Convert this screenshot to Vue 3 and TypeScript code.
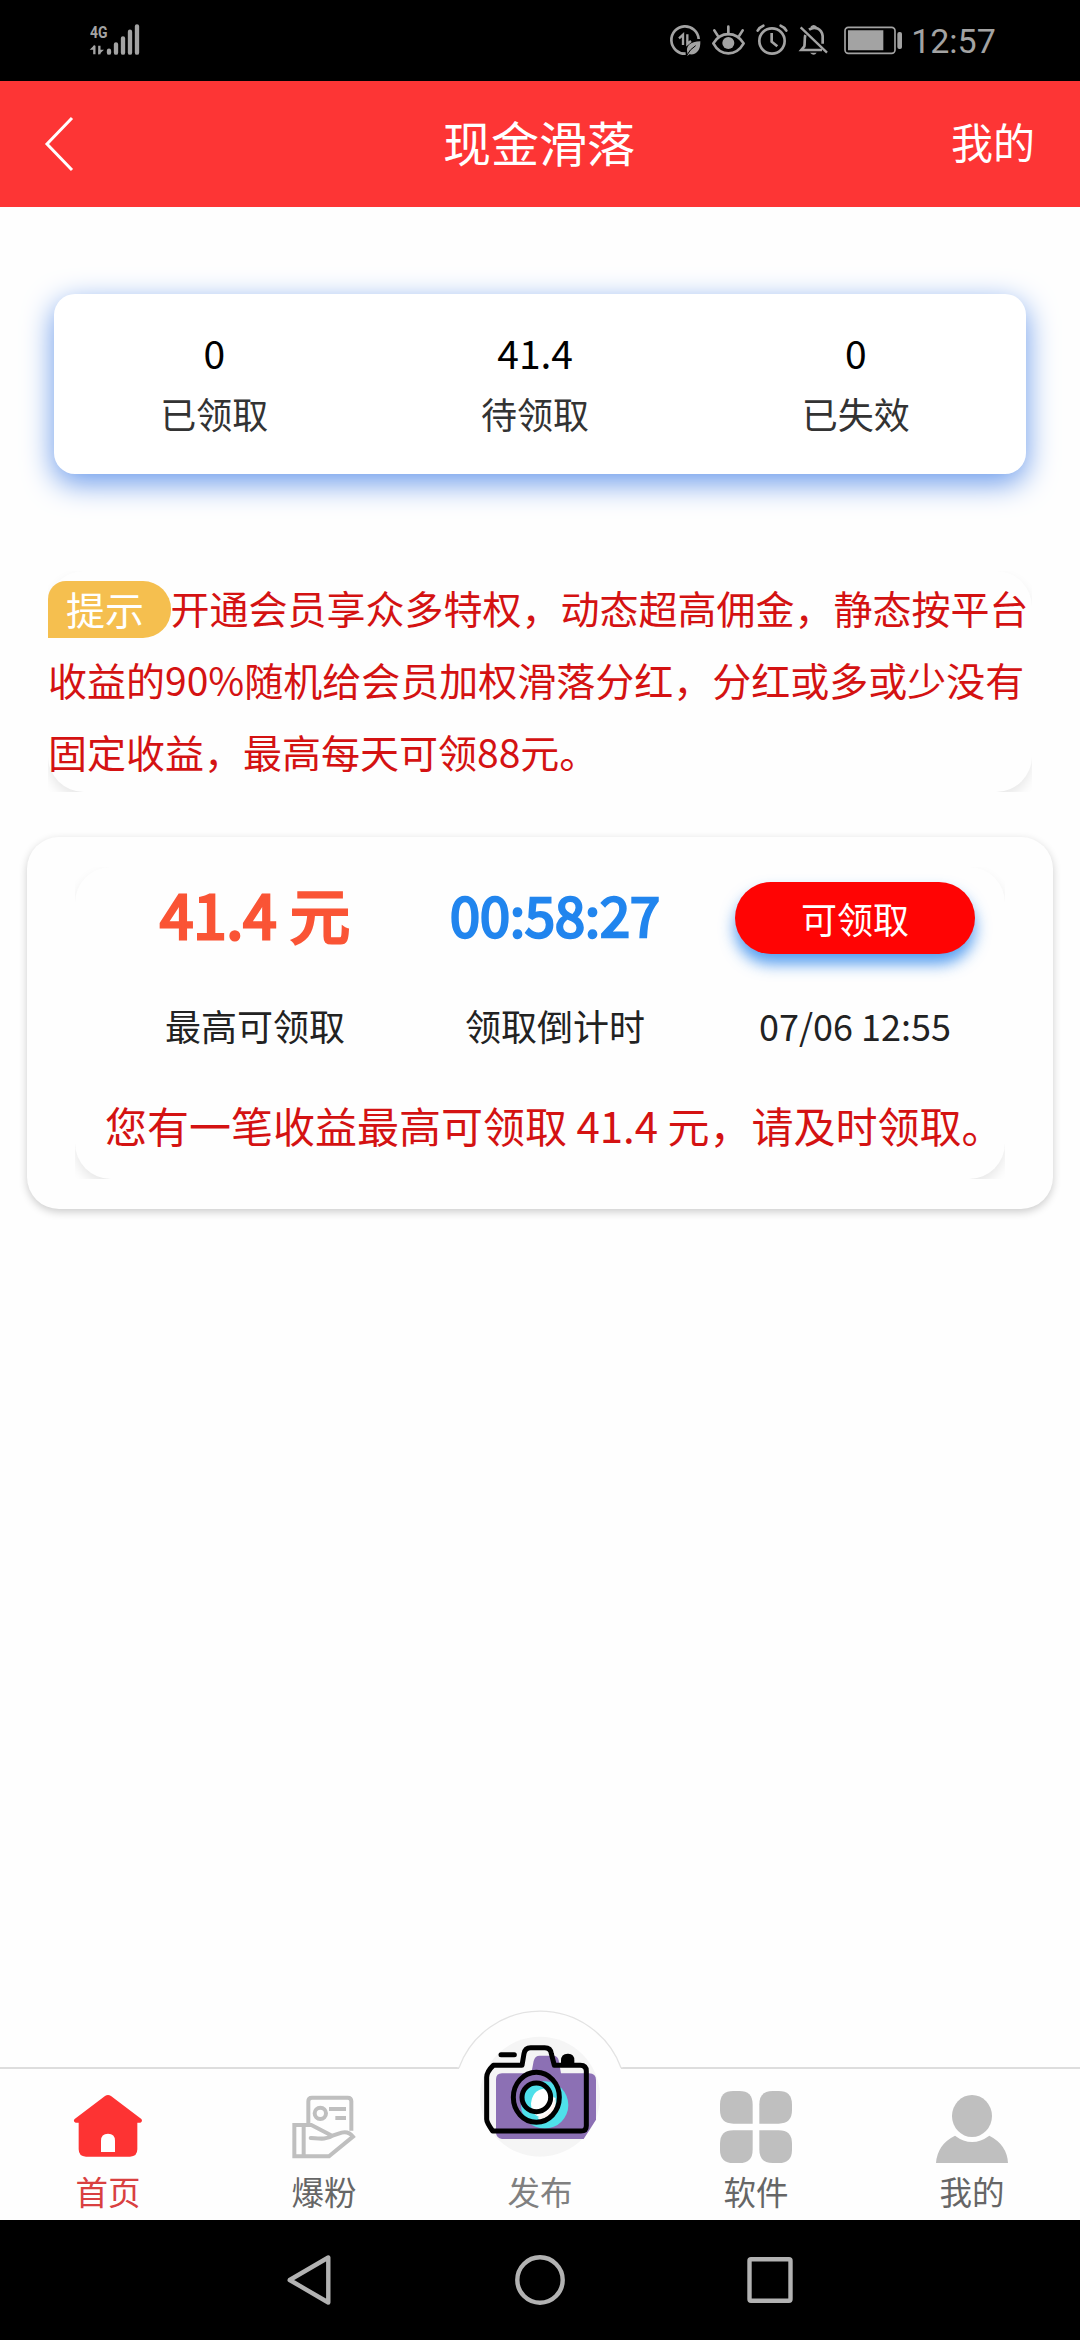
<script setup lang="ts">
import { ref } from 'vue'

interface Stat {
  value: string
  label: string
}

const stats = ref<Stat[]>([
  { value: '0', label: '已领取' },
  { value: '41.4', label: '待领取' },
  { value: '0', label: '已失效' },
])

const amount = ref('41.4')
const countdown = ref('00:58:27')
const createdAt = ref('07/06 12:55')
</script>

<template>
  <div class="phone">
    <div class="status">
      <div class="network">
        <span class="net-type">4G</span>
        <svg class="signal" viewBox="84 70 162 100">
          <g fill="none" stroke="#a3a3a3" stroke-linecap="round">
            <path d="M147 153v6M168 134v25M189 116v43M210 96v63M231 80v79" stroke-width="13" />
            <path d="M103 138v26M118 138v26" stroke-width="7" stroke-linecap="butt" />
          </g>
          <path d="M89 150l15-15v15zM116 165l16-15h-16z" fill="#a3a3a3" />
        </svg>
      </div>
      <div class="tray">
        <svg width="38" height="40" viewBox="54 60 114 120">
          <path d="M107 161a41 41 0 1 1 39-44" fill="none" stroke="#a3a3a3" stroke-width="8" />
          <path d="M99 135v-31l-12 11M112 103v29l11-9" fill="none" stroke="#a3a3a3" stroke-width="7" />
          <path d="M112 158c-5-20 8-33 39-34 1 26-11 42-33 39l-6 5z" fill="#a3a3a3" />
          <path d="M109 168q11-21 28-31" fill="none" stroke="#000" stroke-width="3" />
        </svg>
        <svg width="45" height="40" viewBox="168 60 135 120">
          <path d="M190 130c22-37 68-37 91 0-23 40-69 40-91 0z" fill="none" stroke="#a3a3a3" stroke-width="8" stroke-linejoin="round" />
          <circle cx="235" cy="129" r="18" fill="#a3a3a3" />
          <path d="M235 80v22M193 91l10 16M278 91l-10 16" stroke="#a3a3a3" stroke-width="8" stroke-linecap="round" />
        </svg>
        <svg width="42.33" height="40" viewBox="303 60 127 120">
          <g fill="none" stroke="#a3a3a3" stroke-width="8">
            <circle cx="366" cy="123" r="38" />
            <path d="M365 99v26l17 14" />
            <path d="M323 92q6-11 17-15M409 92q-6-11-17-15" stroke-linecap="round" />
          </g>
        </svg>
        <svg width="43.33" height="40" viewBox="430 60 130 120">
          <g fill="none" stroke="#a3a3a3" stroke-width="8">
            <path d="M453 82l79 76" stroke-width="7" />
            <path d="M467 105c-3 10-1 25-3 34l-9 11h62" />
            <path d="M478 89c17-12 38-3 41 19v23" />
            <path d="M485 82q7-7 14 0" stroke-width="7" />
          </g>
          <path d="M481 158h20q-8 12-20 0z" fill="#a3a3a3" />
        </svg>
        <svg width="73.33" height="40" viewBox="560 60 220 120">
          <rect x="584" y="82" width="150" height="78" rx="10" fill="none" stroke="#a3a3a3" stroke-width="5" />
          <path d="M593 91h106v60H593z" fill="#a3a3a3" />
          <rect x="741" y="96" width="14" height="51" rx="6" fill="#a3a3a3" />
        </svg>
        <span class="clock">12:57</span>
      </div>
    </div>

    <header class="header">
      <svg class="back" width="32" height="58" viewBox="0 0 32 58">
        <path d="M29 3L4 29l25 26" fill="none" stroke="#fff" stroke-width="3" />
      </svg>
      <h1 class="title">现金滑落</h1>
      <span class="mine">我的</span>
    </header>

    <main class="body">
      <section class="stats">
        <div v-for="(s, i) in stats" :key="i" class="stat">
          <span class="stat-value">{{ s.value }}</span>
          <span class="stat-label">{{ s.label }}</span>
        </div>
      </section>

      <section class="clip tips">
        <div class="soft tips-inner">
          <span class="badge">提示</span>开通会员享众多特权，动态超高佣金，静态按平台收益的90%随机给会员加权滑落分红，分红或多或少没有固定收益，最高每天可领88元。
        </div>
      </section>

      <section class="card">
        <div class="clip">
          <div class="soft card-inner">
            <div class="row top">
              <span class="cell amount">{{ amount }} 元</span>
              <span class="cell countdown">{{ countdown }}</span>
              <span class="cell"><button class="claim">可领取</button></span>
            </div>
            <div class="row labels">
              <span class="cell">最高可领取</span>
              <span class="cell">领取倒计时</span>
              <span class="cell">{{ createdAt }}</span>
            </div>
            <p class="message">您有一笔收益最高可领取 {{ amount }} 元，请及时领取。</p>
          </div>
        </div>
      </section>
    </main>

    <nav class="tabs">
      <a class="tab active">
        <svg class="icon" viewBox="216 153 216 216">
          <path d="M315 168q9-6 18 0l91 69q5 7-3 11h-9v80q0 22-22 22H258q-22 0-22-22v-80h-9q-9-4-3-11z" fill="#fd3333" />
          <path d="M303 336v-34q0-21 21-21t21 21v34z" fill="#fff" />
        </svg>
        <span>首页</span>
      </a>
      <a class="tab">
        <svg class="icon" viewBox="864 153 216 216">
          <g fill="none" stroke="#bfbfbf" stroke-width="12">
            <path d="M925 252v-68q0-11 11-11h107q11 0 11 11v88" />
            <circle cx="961" cy="220" r="17" />
            <path d="M987 207h51M1006 234h32" />
            <path d="M996 287l-62-32h-51v94h104l72-59q-13-17-34-12l-27 9c-20 14-44 8-66 7" />
            <path d="M911 255v94" />
          </g>
          <circle cx="932" cy="294" r="6" fill="#bfbfbf" />
        </svg>
        <span>爆粉</span>
      </a>
      <a class="tab publish">
        <svg class="camera" viewBox="81 51 498 459">
          <path d="M87 233A259 259 0 0 1 573 233V510H87z" fill="#fefefe" />
          <path d="M81 233h6A259 259 0 0 1 573 233h6" fill="none" stroke="#e3e3e3" stroke-width="4" />
          <circle cx="330" cy="320" r="180" fill="#f5f5f5" />
          <path d="M198 268q0-18 18-18h88l7-37q4-16 18-16h40q15 0 17 14l7 39h84q21 0 21 20v119l-37 58H216q-18-3-18-20z" fill="#8c70b4" />
          <circle cx="344" cy="345" r="71" fill="#4fe0ea" />
          <path d="M303 340q5-40 38-44l35 29-11 40-24 20q-38-6-38-45z" fill="#fff" />
          <path d="M322 383q42-7 54-61 9 54-47 67z" fill="#fff3ef" />
          <g fill="none" stroke="#000" stroke-width="15" stroke-linecap="round" stroke-linejoin="round">
            <path d="M190 226h86l6-35q3-18 20-18h42q18 0 20 18l9 35h78q18 0 18 18v163q0 16-16 16H188q-18-25-18-35V262q0-17 20-36z" />
            <path d="M213 194h40" />
            <circle cx="319" cy="322" r="43" />
            <ellipse cx="319" cy="322" rx="69" ry="75" />
          </g>
          <path d="M393 229v-18q0-19 20-20t20 20v18z" />
        </svg>
        <span>发布</span>
      </a>
      <a class="tab">
        <svg class="icon" viewBox="120 153 216 216" fill="#bfbfbf">
          <path d="M160 153h18q40 0 40 40v58h-58q-40 0-40-40v-18q0-40 40-40z" />
          <path d="M278 153h18q40 0 40 40v18q0 40-40 40h-58v-58q0-40 40-40z" />
          <path d="M160 271h58v58q0 40-40 40h-18q-40 0-40-40v-18q0-40 40-40z" />
          <path d="M238 271h58q40 0 40 40v18q0 40-40 40h-18q-40 0-40-40z" />
        </svg>
        <span>软件</span>
      </a>
      <a class="tab">
        <svg class="icon" viewBox="768 153 216 216" fill="#bfbfbf">
          <ellipse cx="876" cy="228" rx="60" ry="63" />
          <path d="M768 369q4-56 57-82 51 38 103 0 53 27 56 82z" />
        </svg>
        <span>我的</span>
      </a>
    </nav>

    <div class="sysnav">
      <svg width="56" height="56" viewBox="0 0 56 56"><path d="M45.300 5.500v45L6.700 28z" /></svg>
      <svg width="56" height="56" viewBox="0 0 56 56"><circle cx="28" cy="28" r="22.700" /></svg>
      <svg width="56" height="56" viewBox="0 0 56 56"><rect x="7.500" y="7.200" width="41" height="41.500" rx="1.500" /></svg>
    </div>
  </div>
</template>

<style>
body {
  margin: 0;
  background: #fff;
}
</style>

<style scoped>
.phone {
  display: flex;
  flex-direction: column;
  width: 1080px;
  height: 2340px;
  overflow: hidden;
  background: #fefefe;
  color: #222;
  font-family: 'Noto Sans CJK SC', 'Noto Sans', sans-serif;
}

svg {
  display: block;
  flex: none;
}

.status {
  display: flex;
  justify-content: space-between;
  box-sizing: border-box;
  height: 81px;
  padding: 20px 83px 0 88px;
  background: #000;
  color: #a3a3a3;
}

.network {
  position: relative;
  padding-top: 3px;
}

.signal {
  width: 54px;
  height: 33.33px;
}

.net-type {
  position: absolute;
  top: 2px;
  left: 2px;
  font: 700 17px/20px Roboto, sans-serif;
  transform: scaleX(0.82);
  transform-origin: 0 50%;
}

.tray {
  display: flex;
}

.clock {
  width: 87px;
  font: 400 34px/42px Roboto, sans-serif;
  text-align: center;
}

.header {
  display: flex;
  align-items: center;
  justify-content: space-between;
  box-sizing: border-box;
  height: 126px;
  padding: 0 45px 0 43px;
  background: #fd3535;
  color: #fff;
}

.back {
  margin-right: 52px;
}

.title {
  margin: 0 0 6px;
  font-size: 48px;
  font-weight: 400;
  line-height: 72px;
}

.mine {
  margin-bottom: 7px;
  font-size: 42px;
  line-height: 63px;
}

.body {
  flex: 1;
  padding: 87px 27px 0;
}

.stats {
  display: flex;
  box-sizing: border-box;
  height: 180px;
  margin: 0 27px;
  border-radius: 21px;
  background: #fff;
  box-shadow: 0 9px 30px #6798eb;
}

.stat {
  display: flex;
  flex-direction: column;
  align-items: center;
  width: 33%;
  padding-top: 28px;
}

.stat-value {
  color: #000;
  font-size: 39px;
  line-height: 60px;
}

.stat-label {
  color: #333;
  font-size: 36px;
  line-height: 62px;
}

.clip {
  overflow: hidden;
}

.soft {
  border-radius: 36px;
  background: #fefefe;
  box-shadow: 0 6px 12px rgba(0, 0, 0, 0.09);
}

.tips {
  margin: 97px 21px 0;
}

.tips-inner {
  height: 221px;
  color: #d41212;
  font-size: 39px;
  line-height: 72px;
}

.badge {
  position: relative;
  top: 1px;
  display: inline-block;
  box-sizing: border-box;
  width: 122.5px;
  height: 57px;
  padding-left: 18px;
  border-radius: 18px 28px 28px 0;
  background: #f5bf4f;
  color: #fff;
  line-height: 55px;
}

.card {
  box-sizing: border-box;
  height: 372px;
  margin-top: 45px;
  padding: 30px 48px;
  border-radius: 32px;
  background: #fefefe;
  box-shadow: 0 3px 9px rgba(0, 0, 0, 0.2);
}

.card-inner {
  box-sizing: border-box;
  height: 312px;
  padding-left: 30px;
}

.row {
  display: flex;
}

.cell {
  display: flex;
  align-items: center;
  justify-content: center;
  box-sizing: border-box;
  width: 300px;
}

.top {
  height: 102px;
}

.amount {
  padding-bottom: 12px;
  color: #fa5435;
  font-size: 60px;
  -webkit-text-stroke: 3px #fa5435;
}

.countdown {
  padding-bottom: 9px;
  color: #2185ee;
  font-size: 54px;
  -webkit-text-stroke: 2.6px #2185ee;
}

.claim {
  width: 240px;
  height: 72px;
  padding: 0;
  border: 0;
  border-radius: 36px;
  background: #ff0404;
  box-shadow: 0 10px 15px rgba(30, 125, 235, 0.75);
  color: #fff;
  font: inherit;
  font-size: 36px;
  line-height: 69px;
}

.labels {
  height: 54px;
  margin-top: 29px;
  font-size: 36px;
}

.message {
  margin: 41px 0 0;
  color: #d41212;
  font-size: 42px;
  line-height: 63px;
  white-space: nowrap;
}

.tabs {
  display: flex;
  box-sizing: border-box;
  height: 153px;
  border-top: 2px solid #ddd;
  background: #fefefe;
}

.tab {
  position: relative;
  display: flex;
  flex: 1;
  flex-direction: column;
  align-items: center;
  padding-top: 22px;
  color: #666;
  font-size: 32.5px;
  line-height: 48px;
}

.tab span {
  margin-top: 4px;
}

.active {
  color: #d94040;
}

.icon {
  width: 72px;
  height: 72px;
}

.publish {
  padding-top: 94px;
  color: #808080;
}

/* The round shutter bump rises above the bar's top border. */
.camera {
  position: absolute;
  top: -62px;
  left: 50%;
  width: 166px;
  height: 153px;
  margin-left: -83px;
}

.sysnav {
  display: flex;
  align-items: center;
  justify-content: center;
  gap: 173.5px;
  height: 120px;
  background: #000;
}

.sysnav svg {
  fill: none;
  stroke: #b2b2b2;
  stroke-width: 4.4;
  stroke-linejoin: round;
}
</style>
